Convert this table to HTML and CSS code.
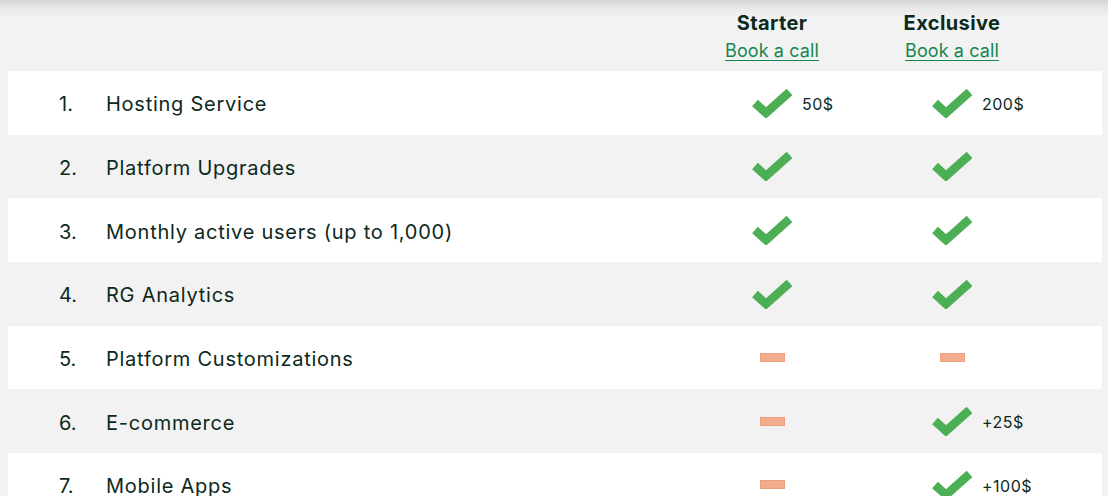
FILE: index.html
```html
<!DOCTYPE html>
<html lang="en">
<head>
<meta charset="utf-8">
<title>Plans comparison</title>
<link rel="stylesheet" href="styles.css">
</head>
<body>
<div class="table">
  <div class="head">
    <div></div>
    <div></div>
    <div class="plan"><div class="plan-name">Starter</div><a class="plan-link" href="#">Book a call</a></div>
    <div class="plan"><div class="plan-name">Exclusive</div><a class="plan-link" href="#">Book a call</a></div>
  </div>

  <div class="row white">
    <div class="num">1.</div><div class="label">Hosting Service</div>
    <div class="cell"><span></span><svg class="check" viewBox="0 0 40 30"><path d="M3 15 L14 25 L37.5 4"/></svg><span class="price">50$</span></div>
    <div class="cell"><span></span><svg class="check" viewBox="0 0 40 30"><path d="M3 15 L14 25 L37.5 4"/></svg><span class="price">200$</span></div>
  </div>
  <div class="row">
    <div class="num">2.</div><div class="label">Platform Upgrades</div>
    <div class="cell"><span></span><svg class="check" viewBox="0 0 40 30"><path d="M3 15 L14 25 L37.5 4"/></svg><span></span></div>
    <div class="cell"><span></span><svg class="check" viewBox="0 0 40 30"><path d="M3 15 L14 25 L37.5 4"/></svg><span></span></div>
  </div>
  <div class="row white">
    <div class="num">3.</div><div class="label">Monthly active users (up to 1,000)</div>
    <div class="cell"><span></span><svg class="check" viewBox="0 0 40 30"><path d="M3 15 L14 25 L37.5 4"/></svg><span></span></div>
    <div class="cell"><span></span><svg class="check" viewBox="0 0 40 30"><path d="M3 15 L14 25 L37.5 4"/></svg><span></span></div>
  </div>
  <div class="row">
    <div class="num">4.</div><div class="label">RG Analytics</div>
    <div class="cell"><span></span><svg class="check" viewBox="0 0 40 30"><path d="M3 15 L14 25 L37.5 4"/></svg><span></span></div>
    <div class="cell"><span></span><svg class="check" viewBox="0 0 40 30"><path d="M3 15 L14 25 L37.5 4"/></svg><span></span></div>
  </div>
  <div class="row white">
    <div class="num">5.</div><div class="label">Platform Customizations</div>
    <div class="cell"><span></span><span class="dash"></span><span></span></div>
    <div class="cell"><span></span><span class="dash"></span><span></span></div>
  </div>
  <div class="row">
    <div class="num">6.</div><div class="label">E-commerce</div>
    <div class="cell"><span></span><span class="dash"></span><span></span></div>
    <div class="cell"><span></span><svg class="check" viewBox="0 0 40 30"><path d="M3 15 L14 25 L37.5 4"/></svg><span class="price">+25$</span></div>
  </div>
  <div class="row white">
    <div class="num">7.</div><div class="label">Mobile Apps</div>
    <div class="cell"><span></span><span class="dash"></span><span></span></div>
    <div class="cell"><span></span><svg class="check" viewBox="0 0 40 30"><path d="M3 15 L14 25 L37.5 4"/></svg><span class="price">+100$</span></div>
  </div>
</div>
</body>
</html>
```

FILE: styles.css
```css
html, body {
  margin: 0;
  padding: 0;
}
body {
  background: linear-gradient(to bottom, #d4d4d4 0px, #e8e8e8 8px, #f2f2f2 18px, #f2f2f2 100%);
  background-color: #f2f2f2;
  font-family: "Inter", "Noto Sans", sans-serif;
  color: #0c291c;
  min-height: 496px;
  overflow: hidden;
}
.table {
  padding: 0 6px 0 8px;
}
.head,
.row {
  display: grid;
  grid-template-columns: 47px 1fr 180px 180px;
  padding: 0 60px 0 51px;
}
.head {
  height: 71px;
  box-sizing: border-box;
  padding-top: 10px;
}
.plan {
  display: flex;
  flex-direction: column;
  align-items: center;
}
.plan-name {
  font-weight: 700;
  font-size: 20px;
  line-height: 26px;
  color: #0b2a1c;
  letter-spacing: 0.4px;
}
.plan-link {
  margin-top: 3px;
  font-size: 18px;
  line-height: 24px;
  color: #16864f;
  letter-spacing: 0.1px;
  text-decoration: underline;
  text-underline-offset: 3px;
  text-decoration-thickness: 1px;
}
.row {
  height: 63.67px;
  align-items: center;
  font-size: 20px;
}
.row.white {
  background: #ffffff;
}
.num,
.label {
  line-height: 24px;
  padding-top: 3px;
}
.label {
  letter-spacing: 0.75px;
}
.cell {
  display: grid;
  grid-template-columns: 1fr auto 1fr;
  align-items: center;
}
.check {
  width: 40px;
  height: 30px;
  display: block;
}
.check path {
  fill: none;
  stroke: #4caf55;
  stroke-width: 8.5;
  stroke-linecap: butt;
  stroke-linejoin: miter;
}
.price {
  margin-left: 10px;
  padding-top: 2px;
  font-size: 16px;
  letter-spacing: 0.5px;
  color: #0c291c;
}
.dash {
  display: block;
  width: 25px;
  height: 9px;
  background: #f3ad8c;
  box-shadow: inset 0 0 0 1px #eea07e;
}
```
